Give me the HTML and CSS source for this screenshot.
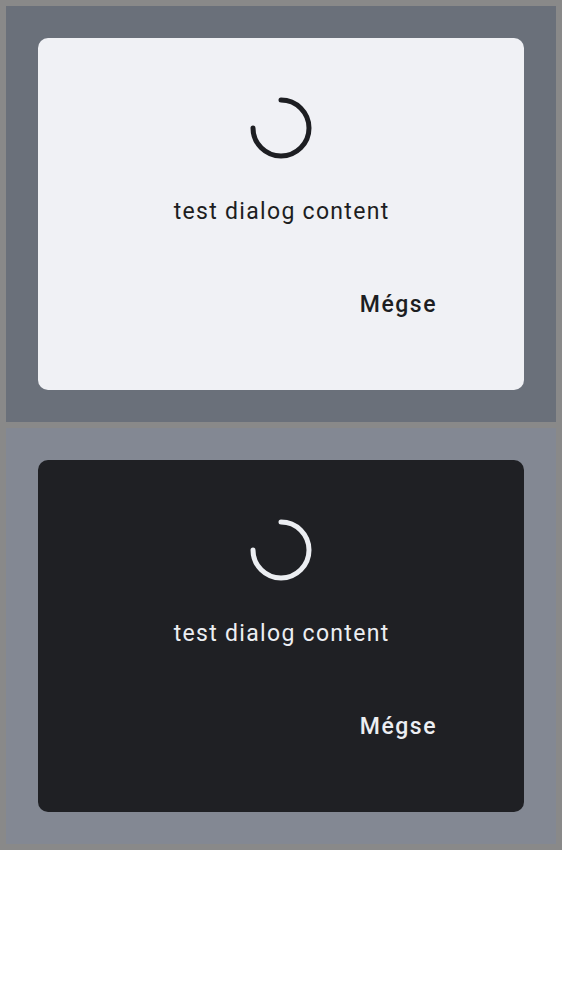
FILE: index.html
```html
<!DOCTYPE html>
<html>
<head>
<meta charset="utf-8">
<link rel="stylesheet" href="styles.css">
</head>
<body>
<div class="frame">
  <section class="panel panel-light">
    <div class="dialog dialog-light">
      <svg class="spinner" viewBox="0 0 62 62" width="62" height="62">
        <path d="M31 3 A28 28 0 1 1 3 31" fill="none" stroke="currentColor" stroke-width="5" stroke-linecap="round"/>
      </svg>
      <p class="content">test dialog content</p>
      <div class="actions"><span class="btn">Mégse</span></div>
    </div>
  </section>
  <section class="panel panel-dark">
    <div class="dialog dialog-dark">
      <svg class="spinner" viewBox="0 0 62 62" width="62" height="62">
        <path d="M31 3 A28 28 0 1 1 3 31" fill="none" stroke="currentColor" stroke-width="5" stroke-linecap="round"/>
      </svg>
      <p class="content">test dialog content</p>
      <div class="actions"><span class="btn">Mégse</span></div>
    </div>
  </section>
</div>
</body>
</html>
```
FILE: styles.css
```css
html, body {
  margin: 0;
  padding: 0;
  background: #ffffff;
}
body {
  font-family: Roboto, "Noto Sans", sans-serif;
}
.frame {
  background: #898989;
  padding: 6px;
  display: flex;
  flex-direction: column;
  gap: 6px;
}
.panel {
  height: 416px;
  box-sizing: border-box;
  padding: 32px;
}
.panel-light { background: #6a707a; }
.panel-dark { background: #838893; }
.dialog {
  height: 352px;
  box-sizing: border-box;
  border-radius: 10px;
  padding-top: 59px;
  display: flex;
  flex-direction: column;
  align-items: center;
}
.dialog-light { background: #f0f1f5; color: #1d1e22; }
.dialog-dark { background: #1f2024; color: #eceef2; }
.spinner { display: block; }
.content {
  margin: 39px 0 0 0;
  font-size: 23px;
  line-height: 28px;
  letter-spacing: 1.3px;
  padding-left: 1.3px;
}
.actions {
  align-self: stretch;
  display: flex;
  justify-content: flex-end;
  padding-right: 87px;
  margin-top: 65px;
}
.btn {
  font-size: 23px;
  font-weight: 500;
  line-height: 28px;
  letter-spacing: 1.5px;
}
```
